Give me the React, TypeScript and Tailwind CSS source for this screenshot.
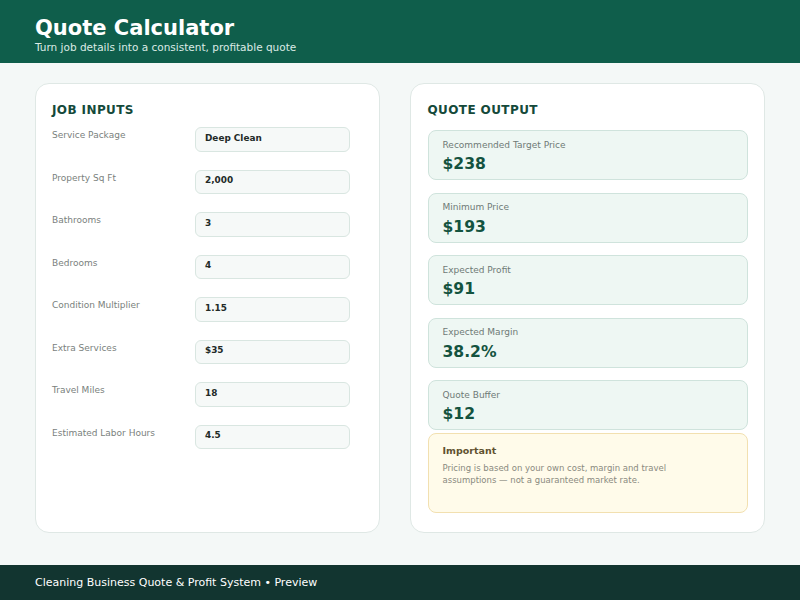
const inputs = [
  ['Service Package', 'Deep Clean'],
  ['Property Sq Ft', '2,000'],
  ['Bathrooms', '3'],
  ['Bedrooms', '4'],
  ['Condition Multiplier', '1.15'],
  ['Extra Services', '$35'],
  ['Travel Miles', '18'],
  ['Estimated Labor Hours', '4.5'],
];

const outputs = [
  ['Recommended Target Price', '$238'],
  ['Minimum Price', '$193'],
  ['Expected Profit', '$91'],
  ['Expected Margin', '38.2%'],
  ['Quote Buffer', '$12'],
];

export default function App() {
  return (
    <div className="flex h-[600px] w-[800px] flex-col overflow-hidden bg-[#f4f8f7] font-['DejaVu_Sans',sans-serif]">
      <header className="h-[63px] bg-[#0f5e4b] px-[35px] pt-[14px]">
        <h1 className="text-[21px] leading-[28px] font-bold text-white">Quote Calculator</h1>
        <p className="mt-[-1px] text-[10.5px] leading-[12px] text-[#dcebe6]">Turn job details into a consistent, profitable quote</p>
      </header>

      <main className="flex flex-1 gap-[30px] px-[35px] pt-[20px] pb-[32px]">
        <section className="w-[345px] rounded-[14px] border border-[#dfe8e5] bg-white px-[16px] pt-[18px]">
          <h2 className="text-[12px] leading-[16px] font-bold tracking-[0.4px] text-[#14493a]">JOB INPUTS</h2>
          <div className="mt-[9px] flex flex-col gap-[18px]">
            {inputs.map(([label, value]) => (
              <div key={label} className="flex">
                <div className="w-[143px] text-[9px] leading-[16px] text-[#7a7f7d]">{label}</div>
                <div className="h-[24.5px] w-[155px] rounded-[6px] border border-[#d9e6e1] bg-[#f6f9f8] px-[9px] pt-[2.5px] text-[8.9px] leading-[14px] font-bold text-[#222a27]">
                  {value}
                </div>
              </div>
            ))}
          </div>
        </section>

        <section className="w-[355px] rounded-[14px] border border-[#dfe8e5] bg-white px-[16.5px] pt-[18px]">
          <h2 className="text-[12px] leading-[16px] font-bold tracking-[0.4px] text-[#14493a]">QUOTE OUTPUT</h2>
          <div className="mt-[12px] flex flex-col gap-[12.5px]">
            {outputs.map(([label, value]) => (
              <div key={label} className="h-[50px] rounded-[8px] border border-[#cfe3dc] bg-[#eef7f3] px-[14px] pt-[7.5px]">
                <div className="text-[9px] leading-[12px] text-[#6f7a76]">{label}</div>
                <div className="mt-[1.5px] text-[15.6px] leading-[24px] font-bold text-[#14533f]">{value}</div>
              </div>
            ))}
          </div>
          <div className="mt-[2.5px] h-[80px] rounded-[8px] border border-[#f2e0b0] bg-[#fffbea] px-[14px] pt-[10px]">
            <div className="text-[9.5px] leading-[14px] font-bold text-[#5f5230]">Important</div>
            <p className="mt-[4px] text-[8.5px] leading-[12.5px] text-[#8a8a80]">
              Pricing is based on your own cost, margin and travel
              <br />
              assumptions — not a guaranteed market rate.
            </p>
          </div>
        </section>
      </main>

      <footer className="flex h-[35px] items-center bg-[#123530] px-[35px] pt-[1px] text-[11px] text-white">
        Cleaning Business Quote &amp; Profit System • Preview
      </footer>
    </div>
  );
}
